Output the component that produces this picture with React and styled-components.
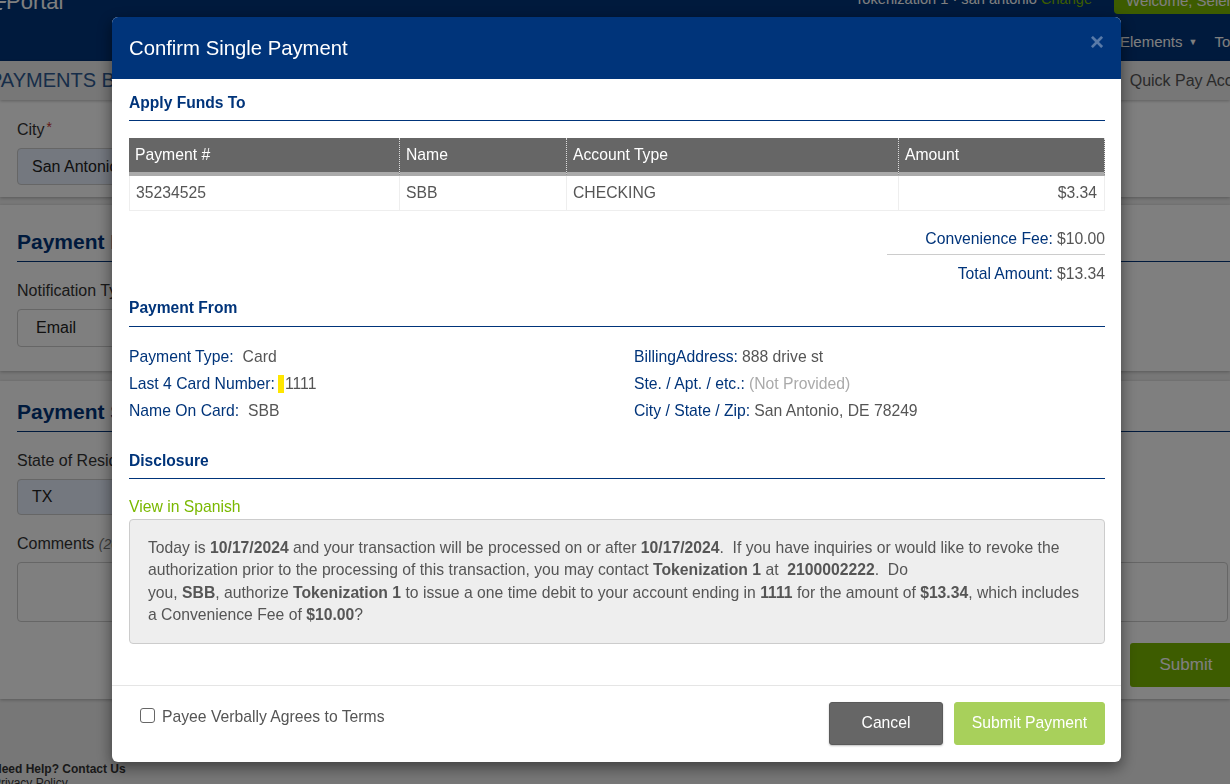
import React from "react";
import styled, { createGlobalStyle } from "styled-components";

const GlobalStyle = createGlobalStyle`
  html, body { margin: 0; padding: 0; }
  body {
    font-family: "Liberation Sans", Arial, sans-serif;
    font-size: 16px;
    width: 1230px;
    height: 784px;
    overflow: hidden;
    background: #eee;
  }
  * { box-sizing: border-box; }
`;

const NAVY = "#00347a";
const FS = "15.73px";

/* ---------- background page ---------- */
const Page = styled.div`
  width: 1230px;
  height: 784px;
  overflow: hidden;
  background: #eee;
  display: flex;
  flex-direction: column;
`;

const TopBar = styled.header`
  background: ${NAVY};
  height: 61px;
  display: flex;
  flex-direction: column;
  flex-shrink: 0;
`;

const TopRow = styled.div`
  height: 30px;
  display: flex;
  justify-content: space-between;
  align-items: flex-start;
`;

const Logo = styled.div`
  margin-top: -11px;
  margin-left: -4px;
  font-size: 22px;
  color: #fff;
  display: flex;
  align-items: center;
  gap: 2px;
`;

const LogoMark = styled.span`
  width: 8px;
  height: 9px;
  margin-top: 7px;
  border-top: 2px solid #fff;
  border-bottom: 2px solid #fff;
  transform: skewX(-30deg);
`;

const TopRight = styled.div`
  display: flex;
  align-items: flex-start;
  gap: 22px;
  margin-right: -40px;
`;

const Location = styled.span`
  margin-top: -9px;
  font-size: 14.6px;
  color: #fff;
  white-space: nowrap;
`;

const GreenText = styled.span`
  color: #7ab800;
`;

const WelcomeBtn = styled.div`
  margin-top: -14px;
  width: 156px;
  height: 28px;
  padding: 6px 12px 0;
  background: #7ab800;
  color: #fff;
  font-size: 15px;
  border-radius: 0 0 0 4px;
  white-space: nowrap;
  overflow: hidden;
`;

const NavRow = styled.nav`
  display: flex;
  gap: 17px;
  padding: 3px 0 0 1120px;
  white-space: nowrap;
  color: #fff;
  font-size: 15px;
  line-height: 18px;
`;

const Caret = styled.span`
  font-size: 9px;
  margin-left: 6px;
  vertical-align: 2px;
`;

const CrumbBar = styled.div`
  height: 39px;
  flex-shrink: 0;
  background: #eee;
  display: flex;
  justify-content: space-between;
  align-items: center;
  box-shadow: 0 1px 3px rgba(0, 0, 0, 0.25);
  position: relative;
  z-index: 1;
  white-space: nowrap;
`;

const PageTitle = styled.h1`
  margin: 0 0 0 -11px;
  font-size: 20px;
  font-weight: normal;
  color: #2f5b92;
`;

const QuickPay = styled.span`
  font-size: 16px;
  color: #555;
  margin-right: -34px;
`;

const Panel = styled.section`
  background: #fff;
  padding: ${(p) => p.$pad};
  margin-bottom: ${(p) => p.$gap}px;
  box-shadow: 0 1px 3px rgba(0, 0, 0, 0.25);
  display: flex;
  flex-direction: column;
  flex-shrink: 0;
`;

const PanelHeading = styled.h2`
  margin: 0 0 ${(p) => p.$mb || 17}px;
  font-size: 21px;
  line-height: 26px;
  font-weight: bold;
  color: ${NAVY};
  padding-bottom: 6px;
  border-bottom: 1px solid ${NAVY};
`;

const FieldLabel = styled.label`
  font-size: 16px;
  line-height: 22px;
  height: 22px;
  color: #333;
  margin: ${(p) => p.$mt || 0}px 0 7px;
`;

const Req = styled.span`
  color: #c9302c;
  font-size: 14px;
  line-height: 0;
  vertical-align: 3px;
  margin-left: 2px;
`;

const Hint = styled.i`
  font-size: 14px;
  color: #777;
`;

const FakeInput = styled.div`
  width: 380px;
  height: ${(p) => p.$h}px;
  border: 1px solid #ccc;
  border-radius: 4px;
  background: ${(p) => (p.$filled ? "#e8f0fe" : "#fff")};
  padding: 0 ${(p) => (p.$filled ? 14 : 18)}px;
  display: flex;
  align-items: center;
  font-size: 16px;
  color: #222;
`;

const FakeTextarea = styled.div`
  width: calc(100% - 2px);
  height: 60px;
  border: 1px solid #ccc;
  border-radius: 4px;
  background: #fff;
`;

const SubmitRow = styled.div`
  display: flex;
  justify-content: flex-end;
  margin: 21px -12px 0 0;
`;

const PageSubmit = styled.div`
  width: 112px;
  height: 44px;
  background: #7ab800;
  color: #fff;
  border-radius: 3px;
  display: flex;
  align-items: center;
  justify-content: center;
  font-size: 17px;
`;

const PageFooter = styled.footer`
  padding: 63px 0 0;
  margin-left: -7px;
  font-size: 12px;
  line-height: 14px;
  color: #333;
`;

const FooterLink = styled.div`
  font-weight: bold;
`;

/* ---------- modal ---------- */
const Overlay = styled.div`
  position: fixed;
  inset: 0;
  z-index: 10;
  background: rgba(0, 0, 0, 0.5);
  padding: 17px 0 0 112px;
  display: flex;
  align-items: flex-start;
`;

const Dialog = styled.div`
  width: 1009px;
  background: #fff;
  border-radius: 6px;
  overflow: hidden;
  box-shadow: 0 5px 15px rgba(0, 0, 0, 0.5);
`;

const DialogHeader = styled.div`
  height: 62px;
  background: ${NAVY};
  display: flex;
  align-items: center;
  justify-content: space-between;
  padding: 0 17px;
`;

const DialogTitle = styled.h3`
  margin: 0;
  font-size: 20.3px;
  font-weight: normal;
  color: #fff;
`;

const CloseBtn = styled.span`
  font-size: 24px;
  font-weight: bold;
  line-height: 1;
  color: rgba(255, 255, 255, 0.35);
  margin-top: -13px;
`;

const DialogBody = styled.div`
  padding: 13px 16px 41px 17px;
  display: flex;
  flex-direction: column;
  font-size: ${FS};
`;

const SectionTitle = styled.h4`
  margin: ${(p) => p.$mt || 0}px 0 0;
  font-size: 15.6px;
  line-height: 22px;
  font-weight: bold;
  color: ${NAVY};
  padding-bottom: ${(p) => p.$pb || 7}px;
  border-bottom: 1px solid ${NAVY};
`;

const Table = styled.table`
  margin-top: 17px;
  width: 976px;
  border-collapse: separate;
  border-spacing: 0;
  table-layout: fixed;
  font-size: ${FS};
`;

const Th = styled.th`
  height: 38px;
  padding: 0 6px;
  background: #666;
  color: #fff;
  font-weight: normal;
  text-align: left;
  border-bottom: 4px solid #aaa;
  border-right: 1px dotted #ddd;
`;

const Td = styled.td`
  height: 35px;
  padding: 0 7px 0 6px;
  color: #555;
  text-align: ${(p) => p.$align || "left"};
  border-bottom: 1px solid #eee;
  border-right: 1px solid #eee;
  &:first-child {
    border-left: 1px solid #eee;
  }
`;

const Totals = styled.div`
  align-self: flex-end;
  width: 218px;
  margin-top: 17px;
  text-align: right;
  line-height: 22px;
`;

const TotalRow = styled.div`
  padding: ${(p) => p.$pad};
  border-top: ${(p) => (p.$line ? "1px solid #ccc" : "none")};
`;

const Lbl = styled.span`
  color: ${NAVY};
`;

const Val = styled.span`
  color: ${(p) => (p.$muted ? "#aaa" : "#555")};
  margin-left: ${(p) => p.$gap ?? 4}px;
`;

const InfoGrid = styled.div`
  margin-top: 16px;
  display: grid;
  grid-template-columns: 505px 1fr;
  grid-auto-rows: 27px;
  align-items: center;
`;

const Highlight = styled.span`
  display: inline-block;
  width: 6px;
  height: 18px;
  background: #ffe600;
  vertical-align: -4px;
  margin: 0 1px 0 -1px;
`;

const SpanishLink = styled.a`
  margin-top: 17px;
  line-height: 22px;
  color: #7ab800;
  text-decoration: none;
  align-self: flex-start;
`;

const DisclosureBox = styled.div`
  margin-top: 1px;
  background: #eee;
  border: 1px solid #ccc;
  border-radius: 4px;
  padding: 17px 18px 16px;
  line-height: 22.4px;
  color: #555;
`;

const B = styled.b`
  color: #555;
`;

const DialogFooter = styled.div`
  border-top: 1px solid #e5e5e5;
  padding: 16px 16px 17px 28px;
  display: flex;
  justify-content: space-between;
  align-items: flex-start;
  font-size: ${FS};
`;

const CheckLabel = styled.label`
  margin-top: 4px;
  display: flex;
  align-items: center;
  gap: 7px;
  line-height: 22px;
  color: #555;
`;

const CheckBox = styled.span`
  width: 15px;
  height: 15px;
  border: 1px solid #666;
  border-radius: 3px;
  background: #fff;
  margin-top: -3px;
`;

const Buttons = styled.div`
  display: flex;
  gap: 11px;
`;

const Button = styled.button`
  width: ${(p) => p.$w}px;
  height: 43px;
  border: 1px solid ${(p) => (p.$primary ? "#a8d05b" : "#5a5a5a")};
  border-radius: 3px;
  background: ${(p) => (p.$primary ? "#a8d05b" : "#666")};
  color: #fff;
  font-family: inherit;
  font-size: ${FS};
  box-shadow: ${(p) => (p.$primary ? "none" : "0 1px 2px rgba(0,0,0,0.25)")};
`;

export default function App() {
  return (
    <>
      <GlobalStyle />
      <Page>
        <TopBar>
          <TopRow>
            <Logo>
              <LogoMark />
              Portal
            </Logo>
            <TopRight>
              <Location>
                Tokenization 1 · san antonio <GreenText>Change</GreenText>
              </Location>
              <WelcomeBtn>Welcome, Selena Smith</WelcomeBtn>
            </TopRight>
          </TopRow>
          <NavRow>
            <span>
              Elements<Caret>▼</Caret>
            </span>
            <span>
              Tools<Caret>▼</Caret>
            </span>
          </NavRow>
        </TopBar>
        <CrumbBar>
          <PageTitle>PAYMENTS BY ACCOUNT</PageTitle>
          <QuickPay>Quick Pay Account</QuickPay>
        </CrumbBar>

        <Panel $pad="19px 17px 12px" $gap={8}>
          <FieldLabel>
            City<Req>*</Req>
          </FieldLabel>
          <FakeInput $h={37} $filled>
            San Antonio
          </FakeInput>
        </Panel>

        <Panel $pad="24px 0 24px 17px" $gap={10}>
          <PanelHeading>Payment Information</PanelHeading>
          <FieldLabel $mt={1}>Notification Type</FieldLabel>
          <FakeInput $h={38}>Email</FakeInput>
        </Panel>

        <Panel $pad="18px 0 12px 17px" $gap={0}>
          <PanelHeading $mb={18}>Payment Settings</PanelHeading>
          <FieldLabel>State of Residence</FieldLabel>
          <FakeInput $h={36} $filled>
            TX
          </FakeInput>
          <FieldLabel $mt={18}>
            Comments <Hint>(200 characters max)</Hint>
          </FieldLabel>
          <FakeTextarea />
          <SubmitRow>
            <PageSubmit>Submit</PageSubmit>
          </SubmitRow>
        </Panel>

        <PageFooter>
          <FooterLink>Need Help? Contact Us</FooterLink>
          <div>Privacy Policy</div>
        </PageFooter>
      </Page>

      <Overlay>
        <Dialog>
          <DialogHeader>
            <DialogTitle>Confirm Single Payment</DialogTitle>
            <CloseBtn>×</CloseBtn>
          </DialogHeader>
          <DialogBody>
            <SectionTitle $pb={6}>Apply Funds To</SectionTitle>
            <Table>
              <colgroup>
                <col style={{ width: 271 }} />
                <col style={{ width: 167 }} />
                <col style={{ width: 332 }} />
                <col style={{ width: 206 }} />
              </colgroup>
              <thead>
                <tr>
                  <Th>Payment #</Th>
                  <Th>Name</Th>
                  <Th>Account Type</Th>
                  <Th>Amount</Th>
                </tr>
              </thead>
              <tbody>
                <tr>
                  <Td>35234525</Td>
                  <Td>SBB</Td>
                  <Td>CHECKING</Td>
                  <Td $align="right">$3.34</Td>
                </tr>
              </tbody>
            </Table>

            <Totals>
              <TotalRow $pad="0 0 4px">
                <Lbl>Convenience Fee:</Lbl>
                <Val>$10.00</Val>
              </TotalRow>
              <TotalRow $pad="8px 0 0" $line>
                <Lbl>Total Amount:</Lbl>
                <Val>$13.34</Val>
              </TotalRow>
            </Totals>

            <SectionTitle $mt={12}>Payment From</SectionTitle>
            <InfoGrid>
              <div>
                <Lbl>Payment Type:</Lbl>
                <Val $gap={9}>Card</Val>
              </div>
              <div>
                <Lbl>BillingAddress:</Lbl>
                <Val>888 drive st</Val>
              </div>
              <div>
                <Lbl>Last 4 Card Number:</Lbl>
                <Val>
                  <Highlight />
                  1111
                </Val>
              </div>
              <div>
                <Lbl>Ste. / Apt. / etc.:</Lbl>
                <Val $muted>(Not Provided)</Val>
              </div>
              <div>
                <Lbl>Name On Card:</Lbl>
                <Val $gap={9}>SBB</Val>
              </div>
              <div>
                <Lbl>City / State / Zip:</Lbl>
                <Val>San Antonio, DE 78249</Val>
              </div>
            </InfoGrid>

            <SectionTitle $mt={26} $pb={6}>Disclosure</SectionTitle>
            <SpanishLink href="#">View in Spanish</SpanishLink>
            <DisclosureBox>
              Today is <B>10/17/2024</B> and your transaction will be processed on or after{" "}
              <B>10/17/2024</B>.&nbsp; If you have inquiries or would like to revoke the
              authorization prior to the processing of this transaction, you may contact{" "}
              <B>Tokenization 1</B> at&nbsp; <B>2100002222</B>.&nbsp; Do
              <br />
              you, <B>SBB</B>, authorize <B>Tokenization 1</B> to issue a one time debit to
              your account ending in <B>1111</B> for the amount of <B>$13.34</B>, which
              includes a Convenience Fee of <B>$10.00</B>?
            </DisclosureBox>
          </DialogBody>
          <DialogFooter>
            <CheckLabel>
              <CheckBox />
              Payee Verbally Agrees to Terms
            </CheckLabel>
            <Buttons>
              <Button $w={114}>Cancel</Button>
              <Button $w={151} $primary>
                Submit Payment
              </Button>
            </Buttons>
          </DialogFooter>
        </Dialog>
      </Overlay>
    </>
  );
}
